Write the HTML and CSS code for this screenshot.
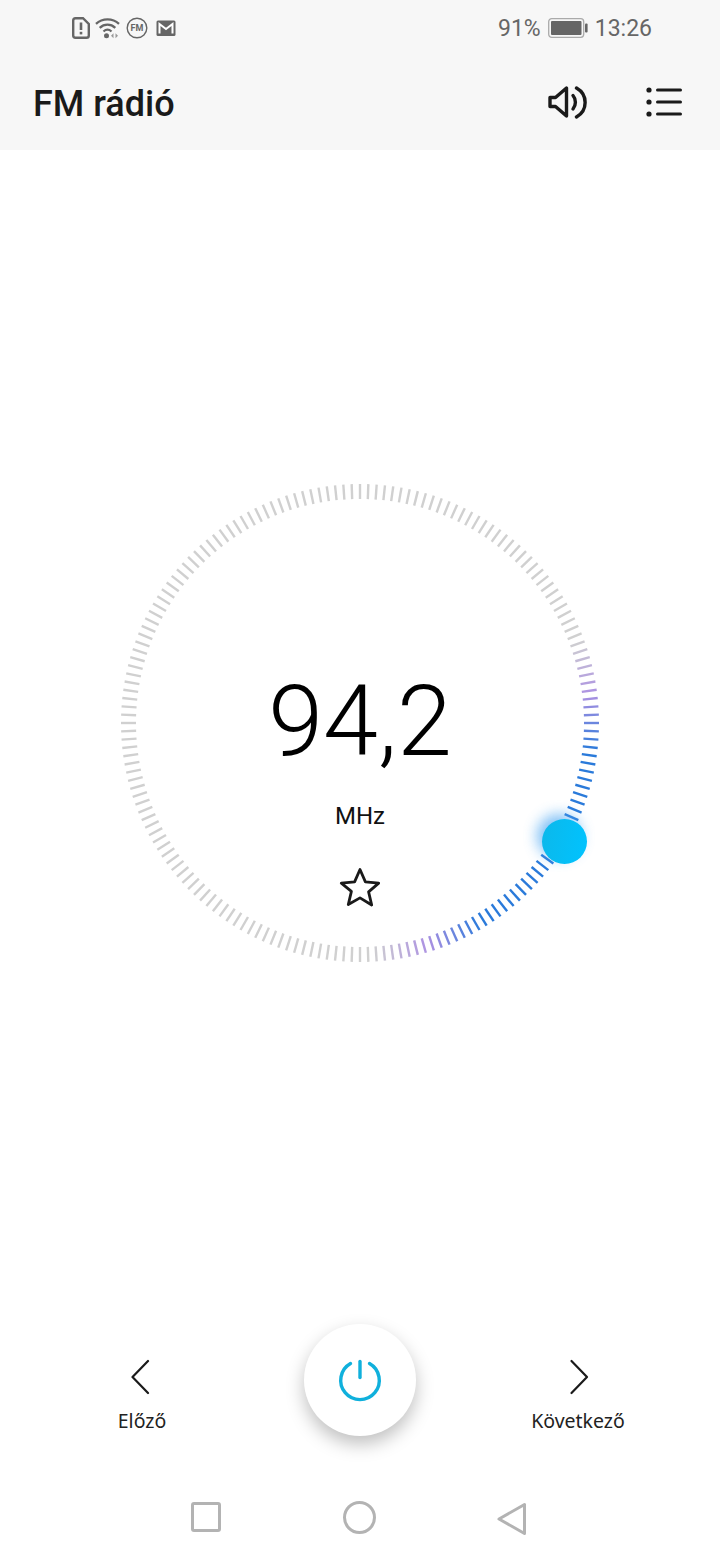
FILE: index.html
```html
<!DOCTYPE html>
<html lang="hu">
<head>
  <meta charset="UTF-8" />
  <meta name="viewport" content="width=device-width, initial-scale=1.0"/>
  <title>FM rádió</title>
  <link rel="stylesheet" href="styles.css">
</head>
<body>
  <div class="phone">
    <div class="top">
      <div class="status">
        <div class="status-icons">
          <svg width="18" height="22" viewBox="0 0 18 22">
            <path d="M3.500 1.200h7.500l5.800 5.800v11.500a2.300 2.300 0 0 1-2.300 2.300H3.500a2.300 2.300 0 0 1-2.300-2.300V3.500a2.300 2.300 0 0 1 2.300-2.300z" fill="none" stroke="#666" stroke-width="2.400"/>
            <rect x="7.700" y="5.500" width="2.600" height="7.500" fill="#666"/>
            <rect x="7.700" y="14.800" width="2.600" height="2.600" fill="#666"/>
          </svg>
          <svg width="26" height="22" viewBox="0 0 26 22">
            <path d="M1 6.800C7.500 .8 17.500 .8 24 6.800M4.700 10.800c4.500-4.200 11.100-4.200 15.600 0M8.500 14.500c2.500-2.300 5.500-2.300 8 0" fill="none" stroke="#666" stroke-width="2.300"/>
            <circle cx="11.500" cy="18.800" r="2.500" fill="#666"/>
            <path d="M18.500 16.300v5l-2.500-2.500zM20.500 16.300v5l2.500-2.500z" fill="#999"/>
          </svg>
          <svg width="22" height="22" viewBox="0 0 22 22">
            <circle cx="11" cy="11" r="9.800" fill="none" stroke="#666" stroke-width="1.400"/>
            <text class="fm-text" x="11" y="14.300" text-anchor="middle">FM</text>
          </svg>
          <svg class="ic-mail" width="20" height="18" viewBox="0 0 20 18">
            <rect x=".5" y="1.500" width="19" height="15.500" rx="1.500" fill="#666"/>
            <path d="M3.500 14.500V5l6.500 5 6.500-5v9.500" fill="none" stroke="#fff" stroke-width="2"/>
          </svg>
        </div>
        <div class="status-right">
          <span>91%</span>
          <svg width="40" height="20" viewBox="0 0 40 20">
            <rect x=".7" y=".7" width="35" height="18.600" rx="3" fill="none" stroke="#aaa" stroke-width="1.300"/>
            <rect x="3" y="3" width="30.500" height="14" rx="1" fill="#666"/>
            <rect x="37" y="5.500" width="2.600" height="9" rx="1" fill="#666"/>
          </svg>
          <span>13:26</span>
        </div>
      </div>
      <div class="titlebar">
        <h1>FM rádió</h1>
        <div class="actions">
          <svg width="44" height="34" viewBox="0 0 44 34">
            <path d="M4 12.500h5.500L20.500 3v28L9.500 21.500H4z" fill="none" stroke="#1a1a1a" stroke-width="3.400" stroke-linejoin="round"/>
            <path d="M27 10.500c3.200 3.800 3.200 9.500 0 13.500" fill="none" stroke="#1a1a1a" stroke-width="3.400" stroke-linecap="round"/>
            <path d="M30.500 3c11.500 6.500 11.500 22.500 0 29" fill="none" stroke="#1a1a1a" stroke-width="3.400" stroke-linecap="round"/>
          </svg>
          <svg width="37" height="30" viewBox="0 0 37 30">
            <circle cx="3" cy="3" r="2.600" fill="#1a1a1a"/>
            <circle cx="3" cy="15" r="2.600" fill="#1a1a1a"/>
            <circle cx="3" cy="27" r="2.600" fill="#1a1a1a"/>
            <path d="M11.500 3h23M11.500 15h23M11.500 27h23" stroke="#1a1a1a" stroke-width="3" stroke-linecap="round"/>
          </svg>
        </div>
      </div>
    </div>

    <div class="main">
      <div class="dial">
        <svg id="ticks" class="dial-ticks" width="480" height="480" viewBox="0 0 480 480"></svg>
        <div class="knob-glow"></div>
        <div class="knob"></div>
        <div class="freq">94,2</div>
        <div class="unit">MHz</div>
        <svg class="star" width="42" height="40" viewBox="0 0 42 40">
          <path d="M21 2.500l5.400 12.400 13.300 1.200-10.100 8.800 3.100 13.100L21 30.900 9.300 37.500l3.100-13.100L2.300 16.100l13.300-1.200z" fill="none" stroke="#1a1a1a" stroke-width="2.800" stroke-linejoin="round"/>
        </svg>
      </div>
    </div>

    <div class="controls">
      <div class="ctl">
        <svg width="22" height="36" viewBox="0 0 22 36"><path d="M17 2L1.500 18 17 34" fill="none" stroke="#1a1a1a" stroke-width="2.200" stroke-linecap="round" stroke-linejoin="round"/></svg>
        <span>Előző</span>
      </div>
      <div class="power">
        <svg width="48" height="48" viewBox="0 0 48 48">
          <path d="M14.500 7.500a19.300 19.300 0 1 0 19 0" fill="none" stroke="#10b0dc" stroke-width="3.400" stroke-linecap="round"/>
          <path d="M24 5.500v16" fill="none" stroke="#10b0dc" stroke-width="3.400" stroke-linecap="round"/>
        </svg>
      </div>
      <div class="ctl">
        <svg width="22" height="36" viewBox="0 0 22 36"><path d="M4.500 2L20 18 4.500 34" fill="none" stroke="#1a1a1a" stroke-width="2.200" stroke-linecap="round" stroke-linejoin="round"/></svg>
        <span>Következő</span>
      </div>
    </div>

    <div class="navbar">
      <div class="nav-square"></div>
      <div class="nav-circle"></div>
      <svg width="30" height="34" viewBox="0 0 30 34"><path d="M27.500 2.500v29L2 17z" fill="none" stroke="#b3b3b3" stroke-width="3" stroke-linejoin="round"/></svg>
    </div>
  </div>
  <script src="script.js"></script>
</body>
</html>
```

FILE: styles.css
```css
* {
  box-sizing: border-box;
}
body {
  margin: 0;
  padding: 0;
  background: #fff;
  font-family: Roboto, "Liberation Sans", sans-serif;
  color: #111;
}
.phone {
  width: 720px;
  height: 1560px;
  display: flex;
  flex-direction: column;
  overflow: hidden;
}
.top {
  height: 150px;
  background: #f7f7f7;
}
.status {
  height: 56px;
  display: flex;
  justify-content: space-between;
  align-items: center;
  padding: 0 68px 0 72px;
  color: #666;
  font-size: 23px;
}
.status-icons {
  display: flex;
  align-items: center;
  gap: 5px;
}
.ic-mail {
  margin-left: 3px;
}
.fm-text {
  font-family: Roboto, sans-serif;
  font-size: 9px;
  font-weight: 700;
  fill: #666;
}
.status-right {
  display: flex;
  align-items: center;
  gap: 7px;
}
.titlebar {
  height: 94px;
  display: flex;
  justify-content: space-between;
  align-items: center;
  padding: 0 37px 0 33px;
}
.titlebar h1 {
  margin: 2px 0 0;
  font-size: 36px;
  font-weight: 500;
  color: #1a1a1a;
}
.actions {
  display: flex;
  align-items: center;
  gap: 56px;
  margin-bottom: 2px;
}
.main {
  flex: 1;
  padding-top: 333px;
  display: flex;
  justify-content: center;
}
.dial {
  position: relative;
  width: 480px;
  height: 480px;
  display: flex;
  flex-direction: column;
  align-items: center;
  padding-top: 178px;
}
.dial-ticks {
  position: absolute;
  left: 0;
  top: 0;
}
.knob {
  position: absolute;
  left: 422px;
  top: 336px;
  width: 45px;
  height: 45px;
  border-radius: 50%;
  background: linear-gradient(100deg, #0cb8ea, #00c3ff);
}
.knob-glow {
  position: absolute;
  left: 417px;
  top: 331px;
  width: 44px;
  height: 44px;
  border-radius: 50%;
  background: #4aa6f2;
  filter: blur(7px);
  opacity: .7;
}
.freq {
  font-size: 99px;
  font-weight: 300;
  line-height: 120px;
  color: #000;
}
.unit {
  font-size: 24px;
  line-height: 28px;
  margin-top: 21px;
  color: #111;
}
.star {
  margin-top: 37px;
}
.controls {
  height: 112px;
  padding: 0 82px;
  display: flex;
  justify-content: space-between;
  align-items: flex-start;
}
.ctl {
  width: 120px;
  display: flex;
  flex-direction: column;
  align-items: center;
  padding-top: 35px;
  gap: 12px;
  font-family: "Noto Sans", sans-serif;
  font-size: 19.500px;
  color: #222;
}
.power {
  width: 112px;
  height: 112px;
  border-radius: 50%;
  background: #fff;
  box-shadow: 0 8px 18px rgba(0, 0, 0, .25);
  display: flex;
  align-items: center;
  justify-content: center;
}
.navbar {
  height: 124px;
  padding: 66px 193px 0 191px;
  display: flex;
  justify-content: space-between;
  align-items: flex-start;
}
.nav-square {
  width: 30px;
  height: 30px;
  border: 3px solid #b3b3b3;
  border-radius: 3px;
}
.nav-circle {
  width: 33px;
  height: 33px;
  margin-top: -1px;
  border: 3px solid #b3b3b3;
  border-radius: 50%;
}
```

FILE: script.js
```js
// tuning ring, one tick every 2 degrees, coloured around the knob
const ring = document.getElementById('ticks');
const colorCenter = 33;

function mix(a, b, t) {
  return a.map((v, i) => Math.round(v + (b[i] - v) * t));
}

function tickColor(deg) {
  const gray = [208, 208, 208];
  const purple = [172, 145, 226];
  const blue = [42, 122, 218];
  let d = Math.abs(deg - colorCenter);
  if (d > 180) d = 360 - d;
  let c = gray;
  if (d < 26) c = blue;
  else if (d < 40) c = mix(blue, purple, (d - 26) / 14);
  else if (d < 54) c = mix(purple, gray, (d - 40) / 14);
  return `rgb(${c.join(',')})`;
}

for (let deg = 0; deg < 360; deg += 2) {
  const rad = deg * Math.PI / 180;
  const line = document.createElementNS('http://www.w3.org/2000/svg', 'line');
  line.setAttribute('x1', 240 + 224 * Math.cos(rad));
  line.setAttribute('y1', 240 + 224 * Math.sin(rad));
  line.setAttribute('x2', 240 + 239 * Math.cos(rad));
  line.setAttribute('y2', 240 + 239 * Math.sin(rad));
  line.setAttribute('stroke', tickColor(deg));
  line.setAttribute('stroke-width', '2.4');
  ring.appendChild(line);
}
```
